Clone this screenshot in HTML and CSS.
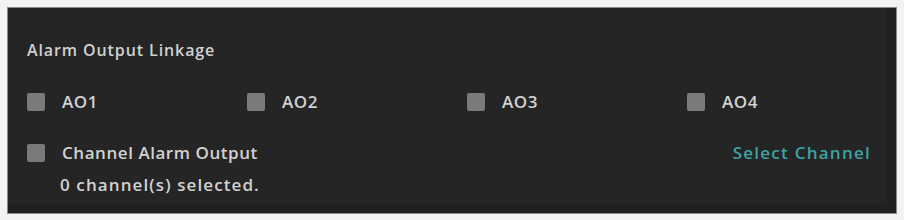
FILE: index.html
```html
<!DOCTYPE html>
<html>
	<head>
		<meta charset="utf-8">
		<title>Alarm Output Linkage</title>
		<link rel="stylesheet" href="styles.css">
	</head>
	<body>
		<div class="panel">
			<div class="panel-title">Alarm Output Linkage</div>

			<div class="ao-row">
				<label class="chk"><span class="box"></span>AO1</label>
				<label class="chk"><span class="box"></span>AO2</label>
				<label class="chk"><span class="box"></span>AO3</label>
				<label class="chk"><span class="box"></span>AO4</label>
			</div>

			<div class="channel-row">
				<label class="chk"><span class="box"></span>Channel Alarm Output</label>
				<a class="select-link" href="#">Select Channel</a>
			</div>
			<div class="channel-count">0 channel(s) selected.</div>
		</div>
	</body>
</html>
```

FILE: styles.css
```css
html, body { margin: 0; padding: 0; }
body {
	background: #f2f2f2;
	font-family: "Open Sans", "Liberation Sans", sans-serif;
	width: 904px;
	height: 220px;
	padding: 7px 7px 0 7px;
	box-sizing: border-box;
}

.panel {
	background: #252525;
	border: 1px solid #8a8a8a;
	height: 207px;
	box-sizing: border-box;
	padding: 30px 28px 0 19px;
	box-shadow: inset -9px -9px 0 #202020;
	color: #d6d6d6;
}

.panel-title {
	font-size: 16px;
	font-weight: 600;
	letter-spacing: 0.9px;
	color: #cfd2cf;
	line-height: 24px;
}

.ao-row {
	display: grid;
	grid-template-columns: repeat(4, 220px);
	margin-top: 30px;
}

.chk {
	display: flex;
	align-items: center;
	gap: 17px;
	font-size: 17px;
	font-weight: 600;
	letter-spacing: 0.55px;
	color: #d2d2d2;
	line-height: 20px;
}

.box {
	width: 18px;
	height: 18px;
	background: #7a7a7a;
	border-radius: 2px;
}

.channel-row {
	display: flex;
	justify-content: space-between;
	align-items: center;
	margin-top: 29px;
}

.select-link {
	color: #3ca3a3;
	text-decoration: none;
	font-size: 17px;
	font-weight: 600;
	letter-spacing: 1.25px;
	margin-right: -3px;
}

.channel-count {
	margin: 9px 0 0 33px;
	font-size: 17px;
	font-weight: 600;
	letter-spacing: 1.1px;
	color: #d2d2d2;
}
```
